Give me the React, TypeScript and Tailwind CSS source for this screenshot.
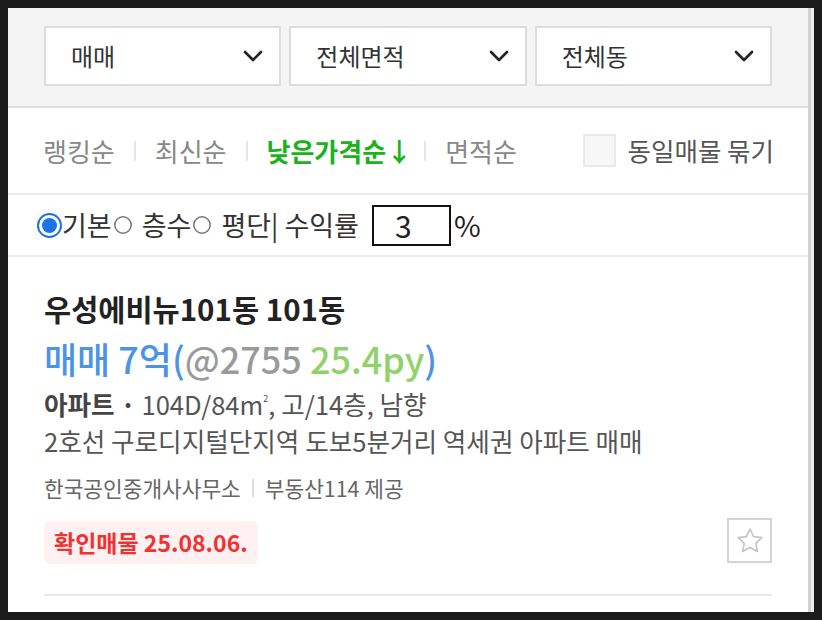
import React from 'react'

const font = { fontFamily: '"Noto Sans CJK KR", "Noto Sans", sans-serif' }

function Chevron() {
  return (
    <svg width="20" height="12" viewBox="0 0 20 12" fill="none">
      <path d="M2 2l8 8 8-8" stroke="#222" strokeWidth="2.6" strokeLinecap="round" strokeLinejoin="round" />
    </svg>
  )
}

function Select({ label }: { label: string }) {
  return (
    <div className="flex h-[60px] items-center justify-between border-2 border-[#dcdcdc] bg-white pl-[25px] pr-[16px]">
      <span className="text-[24px] text-[#333]">{label}</span>
      <Chevron />
    </div>
  )
}

function Radio({ checked }: { checked?: boolean }) {
  if (checked) {
    return (
      <svg className="shrink-0" width="25" height="25" viewBox="0 0 25 25">
        <circle cx="12.5" cy="12.5" r="11.5" fill="#fff" stroke="#1a73e8" strokeWidth="2" />
        <circle cx="12.5" cy="12.5" r="7.5" fill="#1a73e8" />
      </svg>
    )
  }
  return (
    <svg className="ml-[2px] mr-[10px] shrink-0" width="18" height="18" viewBox="0 0 18 18">
      <circle cx="9" cy="9" r="8.2" fill="#fff" stroke="#767676" strokeWidth="1.5" />
    </svg>
  )
}

function Divider({ tight }: { tight?: boolean }) {
  return <span className={`${tight ? 'ml-[12px]' : 'ml-[19px]'} mr-[19px] h-[20px] w-[2px] bg-[#e6e6e6]`} />
}

export default function App() {
  return (
    <div className="flex h-[620px] w-[822px] bg-[#1b1b1b] pt-[8px] pb-[8px] pl-[8px]" style={font}>
      <div className="flex w-[800px] flex-col bg-white">
        {/* filter selects */}
        <div className="grid grid-cols-3 gap-[8px] border-b-2 border-[#e0e0e0] bg-[#f4f4f4] pt-[18px] pb-[20px] pl-[36px] pr-[36px]">
          <Select label="매매" />
          <Select label="전체면적" />
          <Select label="전체동" />
        </div>

        {/* sort row */}
        <div className="flex h-[87px] items-center border-b-2 border-[#ebebeb] pl-[35px] pr-[34px] text-[26px]">
          <span className="text-[#888]">랭킹순</span>
          <Divider />
          <span className="text-[#888]">최신순</span>
          <Divider />
          <span className="font-bold text-[#1bb21b]">낮은가격순↓</span>
          <Divider tight />
          <span className="text-[#888]">면적순</span>
          <div className="ml-auto flex items-center text-[25.5px]">
            <span className="mr-[12px] h-[33px] w-[33px] border-2 border-[#eaeaea] bg-[#f7f7f7]" />
            <span className="text-[#555]">동일매물 묶기</span>
          </div>
        </div>

        {/* radio row */}
        <div className="flex h-[62px] items-center border-b-2 border-[#ebebeb] pl-[29px] text-[27px] text-[#333]">
          <Radio checked />
          <span>기본</span>
          <Radio />
          <span>층수</span>
          <Radio />
          <span>평단| 수익률</span>
          <span className="ml-[13px] flex h-[41px] w-[79px] items-center border-2 border-[#111] pl-[21px] text-[30px] text-[#222]">3</span>
          <span className="ml-[3px] text-[29px] text-[#222]">%</span>
        </div>

        {/* listing */}
        <div className="flex flex-1 flex-col pl-[36px] pr-[36px] pt-[31px]">
          <div className="text-[29.5px] font-bold leading-[40px] text-[#222]">우성에비뉴101동 101동</div>
          <div className="mt-[8px] text-[36px] font-medium leading-[44px]">
            <span className="text-[#4a93e6]">매매 7억(</span>
            <span className="text-[#9a9a9a]">@2755 </span>
            <span className="text-[#8fd16a]">25.4py</span>
            <span className="text-[#4a93e6]">)</span>
          </div>
          <div className="mt-[8px] text-[25.6px] leading-[32px] text-[#555]">
            <span className="font-bold text-[#444]">아파트 · </span>
            104D/84m<sup className="top-[-13px] text-[9px]">2</sup>, 고/14층, 남향
          </div>
          <div className="mt-[5px] text-[25.6px] leading-[32px] text-[#555]">2호선 구로디지털단지역 도보5분거리 역세권 아파트 매매</div>
          <div className="mt-[17px] flex items-center text-[21.4px] leading-[28px] text-[#666]">
            <span>한국공인중개사사무소</span>
            <span className="mx-[11px] h-[18px] w-[2px] bg-[#dcdcdc]" />
            <span>부동산114 제공</span>
          </div>
          <div className="mt-[16px] flex items-start justify-between">
            <span className="mt-[3px] flex h-[43px] items-center rounded-[6px] bg-[#fff1f1] px-[10px] text-[23px] font-bold text-[#f23131]">확인매물 25.08.06.</span>
            <span className="flex h-[45px] w-[45px] items-center justify-center border-2 border-[#d4d4d4] bg-white">
              <svg width="28" height="27" viewBox="0 0 28 27" fill="none">
                <path d="M14 2l3.6 7.6 8.2 1-6 5.7 1.6 8.2L14 20.5l-7.4 4 1.6-8.2-6-5.7 8.2-1z" stroke="#c4c4c4" strokeWidth="1.6" strokeLinejoin="round" />
              </svg>
            </span>
          </div>
          <div className="mt-[30px] h-[2px] bg-[#e8e8e8]" />
        </div>
      </div>
      <div className="flex w-[6px]">
        <div className="w-[3px] bg-[#d2d2d2]" />
        <div className="w-[3px] bg-[#efefef]" />
      </div>
    </div>
  )
}
